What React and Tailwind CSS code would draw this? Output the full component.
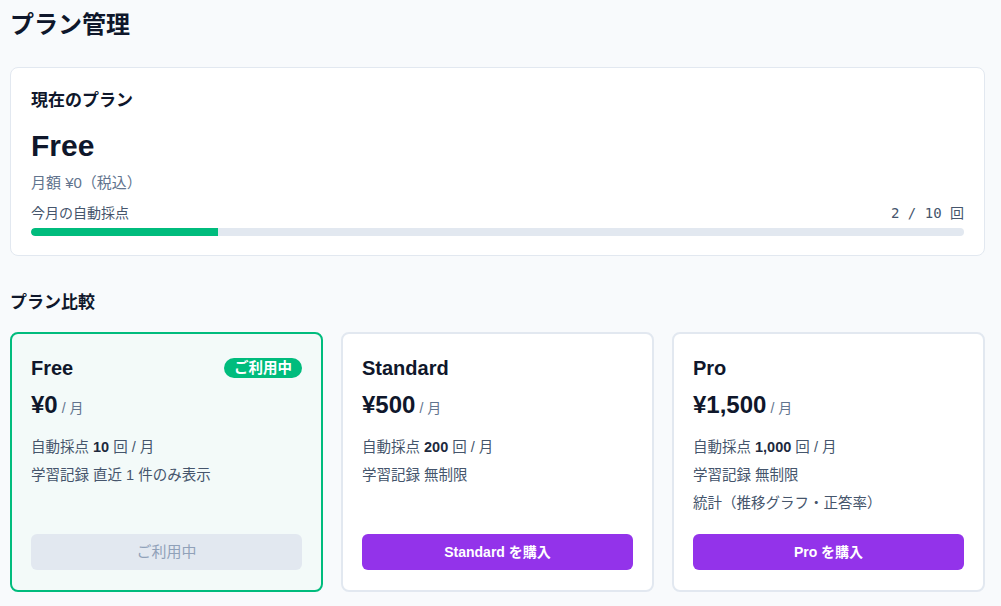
import React from 'react';

const plans = [
    {
        name: 'Free',
        price: '¥0',
        current: true,
        features: [
            <>自動採点 <b className="font-bold text-slate-800">10</b> 回 / 月</>,
            <>学習記録 直近 1 件のみ表示</>,
        ],
    },
    {
        name: 'Standard',
        price: '¥500',
        features: [
            <>自動採点 <b className="font-bold text-slate-800">200</b> 回 / 月</>,
            <>学習記録 無制限</>,
        ],
    },
    {
        name: 'Pro',
        price: '¥1,500',
        features: [
            <>自動採点 <b className="font-bold text-slate-800">1,000</b> 回 / 月</>,
            <>学習記録 無制限</>,
            <>統計（推移グラフ・正答率）</>,
        ],
    },
];

const PlanCard = ({ plan }) => (
    <div
        className={`flex flex-col h-[260px] rounded-lg border-2 px-[19px] pt-[19px] pb-[20px] ${plan.current
                ? 'border-emerald-500 bg-[#f3faf9]'
                : 'border-slate-200 bg-white'
            }`}
    >
        <div className="flex items-center justify-between h-[30px]">
            <span className="text-[20px] font-bold text-slate-900">{plan.name}</span>
            {plan.current && (
                <span className="bg-emerald-500 text-white text-[14.5px] font-bold rounded-full px-[10px] leading-[20px]">
                    ご利用中
                </span>
            )}
        </div>
        <div className="flex items-baseline gap-[4px] mt-[5px]">
            <span className="text-[24px] font-bold text-slate-900 leading-[34px]">{plan.price}</span>
            <span className="text-[14px] text-slate-500">/ 月</span>
        </div>
        <ul className="mt-[11px] flex flex-col text-[14.5px] text-slate-600">
            {plan.features.map((f, i) => (
                <li key={i} className="leading-[28px]">{f}</li>
            ))}
        </ul>
        <div className="mt-auto">
            {plan.current ? (
                <button className="w-full h-[36px] rounded-md bg-slate-200 text-slate-400 text-[15px]">
                    ご利用中
                </button>
            ) : (
                <button className="w-full h-[36px] rounded-md bg-[#9333ea] text-white text-[14px] font-bold">
                    {plan.name} を購入
                </button>
            )}
        </div>
    </div>
);

export default function App() {
    return (
        <div
            className="min-h-screen bg-slate-50 pl-[10px] pr-[16px] pt-[8px] text-slate-900"
            style={{ fontFamily: '"Liberation Sans", "Noto Sans CJK JP", sans-serif' }}
        >
            <h1 className="text-[24px] font-bold leading-[34px]">プラン管理</h1>

            {/* current plan */}
            <div className="mt-[25px] bg-white rounded-lg border border-slate-200 px-[20px] pt-[21px] h-[189px]">
                <h2 className="text-[17px] font-bold leading-[24px]">現在のプラン</h2>
                <div className="text-[30px] font-bold leading-[36px] mt-[15px]">Free</div>
                <div className="text-[15px] text-slate-500 leading-[22px] mt-[8px]">月額 ¥0（税込）</div>
                <div className="flex items-center justify-between mt-[9px] text-[14px] text-slate-600 leading-[20px]">
                    <span>今月の自動採点</span>
                    <span style={{ fontFamily: '"DejaVu Sans Mono", "Noto Sans CJK JP", monospace' }}>2 / 10 回</span>
                </div>
                <div className="mt-[5px] h-[8px] rounded-full bg-slate-200 overflow-hidden">
                    <div className="h-full bg-emerald-500 rounded-l-full" style={{ width: '20%' }} />
                </div>
            </div>

            <h2 className="mt-[35px] text-[17px] font-bold leading-[24px]">プラン比較</h2>

            <div className="mt-[17px] grid grid-cols-3 gap-[18px]">
                {plans.map((p) => (
                    <PlanCard key={p.name} plan={p} />
                ))}
            </div>
        </div>
    );
}
